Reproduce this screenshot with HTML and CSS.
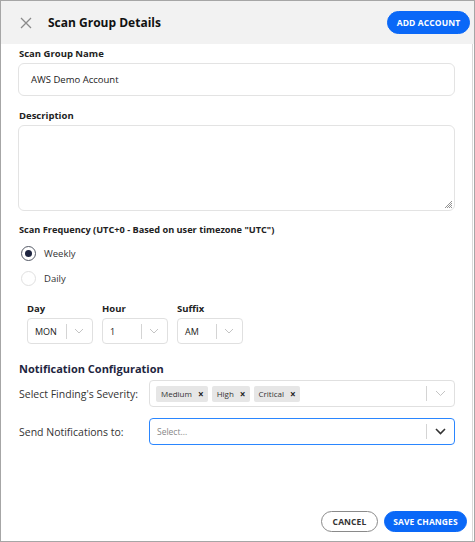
FILE: index.html
```html
<!DOCTYPE html>
<html>
<head>
<meta charset="utf-8">
<link rel="stylesheet" href="styles.css">
</head>
<body>
<div class="dialog">
  <div class="header">
    <svg class="close" width="12" height="12" viewBox="0 0 12 12"><path d="M1 1L11 11M11 1L1 11" stroke="#8a8a8a" stroke-width="1.3" fill="none"/></svg>
    <h1 class="title">Scan Group Details</h1>
    <button class="btn btn-primary btn-add">ADD ACCOUNT</button>
  </div>
  <div class="content">
    <label class="label first">Scan Group Name</label>
    <div class="input">AWS Demo Account</div>
    <label class="label">Description</label>
    <div class="textarea">
      <svg class="grip" width="10" height="10" viewBox="0 0 10 10"><path d="M9 2L2 9M9 4L4 9M9 6L6 9M9 8L8 9" stroke="#777" stroke-width="0.8"/></svg>
    </div>
    <label class="label freq">Scan Frequency (UTC+0 - Based on user timezone "UTC")</label>
    <div class="radio-row checked"><span class="radio"><span class="dot"></span></span><span>Weekly</span></div>
    <div class="radio-row"><span class="radio"></span><span>Daily</span></div>
    <div class="schedule">
      <div class="field">
        <div class="small-label">Day</div>
        <div class="select"><span class="val">MON</span><span class="sep"></span><svg class="chev" width="10" height="6" viewBox="0 0 10 6"><path d="M1 1L5 5L9 1" stroke="#c4c4c4" stroke-width="1" fill="none"/></svg></div>
      </div>
      <div class="field">
        <div class="small-label">Hour</div>
        <div class="select"><span class="val">1</span><span class="sep"></span><svg class="chev" width="10" height="6" viewBox="0 0 10 6"><path d="M1 1L5 5L9 1" stroke="#c4c4c4" stroke-width="1" fill="none"/></svg></div>
      </div>
      <div class="field">
        <div class="small-label">Suffix</div>
        <div class="select"><span class="val">AM</span><span class="sep"></span><svg class="chev" width="10" height="6" viewBox="0 0 10 6"><path d="M1 1L5 5L9 1" stroke="#c4c4c4" stroke-width="1" fill="none"/></svg></div>
      </div>
    </div>
    <div class="section-title">Notification Configuration</div>
    <div class="row">
      <div class="row-label">Select Finding's Severity:</div>
      <div class="multi">
        <div class="tags">
          <span class="tag">Medium<span class="x">×</span></span>
          <span class="tag">High<span class="x">×</span></span>
          <span class="tag">Critical<span class="x">×</span></span>
        </div>
        <span class="sep"></span>
        <svg class="chev" width="11" height="7" viewBox="0 0 11 7"><path d="M1 1L5.5 5.5L10 1" stroke="#c4c4c4" stroke-width="1" fill="none"/></svg>
      </div>
    </div>
    <div class="row">
      <div class="row-label">Send Notifications to:</div>
      <div class="multi focused">
        <div class="tags"><span class="placeholder">Select...</span></div>
        <span class="sep"></span>
        <svg class="chev" width="11" height="7" viewBox="0 0 11 7"><path d="M1 1L5.5 5.5L10 1" stroke="#333" stroke-width="1.6" fill="none"/></svg>
      </div>
    </div>
    <div class="footer">
      <button class="btn btn-outline">CANCEL</button>
      <button class="btn btn-primary btn-save">SAVE CHANGES</button>
    </div>
  </div>
</div>
</body>
</html>
```
FILE: styles.css
```css
* { box-sizing: border-box; }
html, body { margin: 0; padding: 0; background: #fff; }
body { font-family: "Open Sans", "Liberation Sans", sans-serif; color: #1e2235; }
.dialog {
  width: 475px; height: 542px;
  border: 1px solid #a6a6a6;
  display: flex; flex-direction: column;
  overflow: hidden;
}
.header {
  height: 43px; flex: none;
  background: #f2f2f2;
  display: flex; align-items: center;
  padding: 0 4px 0 19px;
}
.close { flex: none; }
.title {
  margin: 0 0 0 16px; flex: 1;
  font-size: 12px; font-weight: 700; color: #111;
}
.btn {
  font-family: inherit; font-weight: 700; border-radius: 12px; cursor: pointer;
  height: 21px; padding: 0; font-size: 8.5px; letter-spacing: 0.1px;
}
.btn-primary { background: #0a68f7; color: #fff; border: 1px solid #0a68f7; }
.btn-add { width: 83px; height: 23px; }
.btn-save { width: 83px; }
.btn-outline { background: #fff; color: #333; border: 1px solid #8a8a8a; width: 57px; }
.content {
  flex: 1;
  padding: 0 17px 0 17px;
  border-right: 1px solid #d9d9d9;
  margin-right: 1px;
  display: flex; flex-direction: column;
}
.label {
  display: block;
  font-size: 9.5px; font-weight: 700; color: #222;
  margin: 14px 0 3px 1px; line-height: 12px;
}
.label.first { margin-top: 4px; }
.input {
  height: 33px; border: 1px solid #e3e3e3; border-radius: 6px;
  display: flex; align-items: center; padding-left: 12px;
  font-size: 9.5px; color: #222;
}
.textarea {
  height: 86px; border: 1px solid #e3e3e3; border-radius: 6px;
  position: relative;
}
.grip { position: absolute; right: 1px; bottom: 1px; }
.freq { margin-top: 13px; margin-bottom: 5px; font-size: 9.2px; }
.radio-row {
  display: flex; align-items: center; gap: 8px;
  height: 25px; padding-left: 3px;
  font-size: 9.5px; color: #333;
}
.radio {
  width: 15px; height: 15px; border-radius: 50%;
  border: 1px solid #e0e0e0; display: flex; align-items: center; justify-content: center;
}
.checked .radio { border: 1.5px solid #555a66; }
.dot { width: 7px; height: 7px; border-radius: 50%; background: #1e2540; }
.schedule { display: flex; gap: 9px; padding-left: 9px; margin-top: 12px; }
.small-label { font-size: 9.5px; font-weight: 700; color: #222; line-height: 12px; margin-bottom: 3px; }
.select {
  width: 66px; height: 26px; border: 1px solid #e0e0e0; border-radius: 4px;
  display: flex; align-items: center; padding-left: 7px;
  font-size: 9px; color: #222;
}
.select .val { flex: 1; }
.sep { width: 1px; height: 15px; background: #d4d4d4; flex: none; }
.select .chev { margin: 0 8px 0 7px; }
.section-title { font-size: 11px; font-weight: 700; color: #1e2540; margin: 18px 0 0 1px; line-height: 14px; }
.row { display: flex; align-items: center; margin-top: 4px; }
.row + .row { margin-top: 11px; }
.row-label { width: 131px; padding-left: 1px; font-size: 10.5px; color: #333; }
.multi {
  flex: 1; height: 27px; border: 1px solid #e0e0e0; border-radius: 4px;
  display: flex; align-items: center; padding-left: 6px;
}
.multi.focused { border: 1.5px solid #2a86ff; }
.tags { flex: 1; display: flex; gap: 4px; align-items: center; }
.tag {
  background: #e6e6e6; border-radius: 2px; height: 16px;
  display: flex; align-items: center; padding: 0 4px 0 5px; gap: 6px;
  font-size: 8px; color: #333;
}
.tag .x { font-weight: 700; font-size: 10px; color: #222; }
.placeholder { font-size: 8.5px; color: #888; padding-left: 1px; }
.multi .chev { margin: 0 8px 0 8px; }
.footer {
  margin-top: auto; display: flex; justify-content: flex-end; gap: 6px;
  padding-bottom: 9px; margin-right: -12px;
}
```
